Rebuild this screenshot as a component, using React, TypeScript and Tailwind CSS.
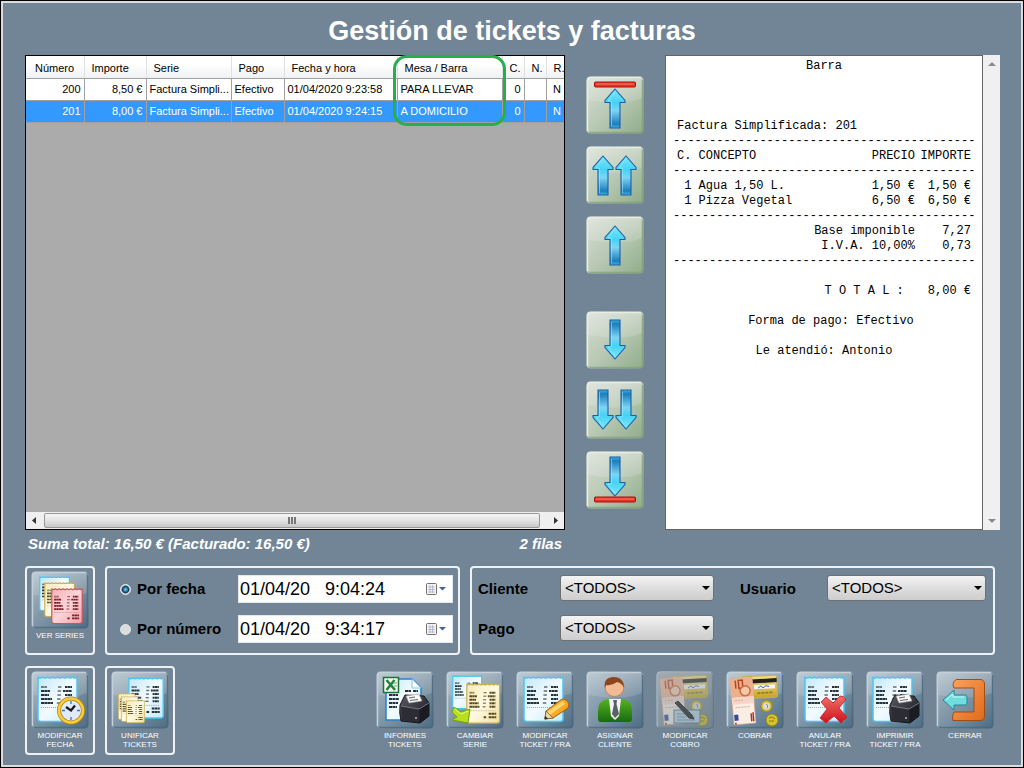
import { useState } from 'react';
import type { ReactNode } from 'react';

const TICKETS = [
  { numero: '200', importe: '8,50 €', serie: 'Factura Simpli...', pago: 'Efectivo', fecha: '01/04/2020 9:23:58', mesa: 'PARA LLEVAR', c: '0', n: '', r: 'N' },
  { numero: '201', importe: '8,00 €', serie: 'Factura Simpli...', pago: 'Efectivo', fecha: '01/04/2020 9:24:15', mesa: 'A DOMICILIO', c: '0', n: '', r: 'N' },
];

const HEADERS = ['Número', 'Importe', 'Serie', 'Pago', 'Fecha y hora', 'Mesa / Barra', 'C.', 'N.', 'R.'];

const DASHES = '-'.repeat(42);

// Gradients shared by every icon on the page
function IconDefs() {
  return (
    <svg className="absolute size-0" aria-hidden="true">
      <defs>
        <linearGradient id="slate" x1="0" y1="0" x2="1" y2="1">
          <stop offset="0" stopColor="#a9bac6" />
          <stop offset="0.5" stopColor="#7e95a6" />
          <stop offset="1" stopColor="#4d6c83" />
        </linearGradient>
        <linearGradient id="sage" x1="0" y1="0" x2="1" y2="1">
          <stop offset="0" stopColor="#d6ded4" />
          <stop offset="0.5" stopColor="#b9c9b5" />
          <stop offset="1" stopColor="#8fac89" />
        </linearGradient>
        <linearGradient id="gloss" x1="0" y1="0" x2="0" y2="1">
          <stop offset="0" stopColor="#fff" stopOpacity="0.25" />
          <stop offset="1" stopColor="#fff" stopOpacity="0.12" />
        </linearGradient>
        <linearGradient id="arrow" x1="0" y1="0" x2="0" y2="1">
          <stop offset="0" stopColor="#7fe6fb" />
          <stop offset="0.35" stopColor="#45d3f5" />
          <stop offset="0.55" stopColor="#7ed4f3" />
          <stop offset="0.9" stopColor="#1b7dbb" />
          <stop offset="1" stopColor="#3fb4e0" />
        </linearGradient>
        <linearGradient id="bluePaper" x1="0" y1="0" x2="1" y2="1">
          <stop offset="0" stopColor="#c3e8f8" />
          <stop offset="0.5" stopColor="#f3fbff" />
          <stop offset="1" stopColor="#c5eafa" />
        </linearGradient>
        <linearGradient id="creamPaper" x1="0" y1="0" x2="1" y2="1">
          <stop offset="0" stopColor="#f7ebb9" />
          <stop offset="0.5" stopColor="#fff9e2" />
          <stop offset="1" stopColor="#efdf9f" />
        </linearGradient>
        <linearGradient id="pinkPaper" x1="0" y1="0" x2="1" y2="1">
          <stop offset="0" stopColor="#f6b3b9" />
          <stop offset="0.5" stopColor="#fad5d8" />
          <stop offset="1" stopColor="#f09fa8" />
        </linearGradient>
        <linearGradient id="green" x1="0" y1="0" x2="0" y2="1">
          <stop offset="0" stopColor="#57b21f" />
          <stop offset="1" stopColor="#176b10" />
        </linearGradient>
        <linearGradient id="orange" x1="0" y1="0" x2="1" y2="1">
          <stop offset="0" stopColor="#f9a25c" />
          <stop offset="1" stopColor="#e06a1c" />
        </linearGradient>
        <linearGradient id="red" x1="0" y1="0" x2="0" y2="1">
          <stop offset="0" stopColor="#f0706a" />
          <stop offset="1" stopColor="#cf1219" />
        </linearGradient>
        <linearGradient id="printer" x1="0" y1="0" x2="1" y2="1">
          <stop offset="0" stopColor="#5c5c66" />
          <stop offset="1" stopColor="#14141a" />
        </linearGradient>
        <linearGradient id="gold" x1="0" y1="0" x2="0" y2="1">
          <stop offset="0" stopColor="#efe08a" />
          <stop offset="1" stopColor="#c5a52f" />
        </linearGradient>
      </defs>
    </svg>
  );
}

function Tile({ tone = 'slate', children }: { tone?: 'slate' | 'sage'; children: ReactNode }) {
  const light = tone === 'slate' ? '#c3d0d9' : '#e6eee3';
  const dark = tone === 'slate' ? '#48657b' : '#7fa078';
  return (
    <svg viewBox="0 0 58 58" className="size-[58px] shrink-0" aria-hidden="true">
      <rect x="0.5" y="0.5" width="57" height="57" rx="4" fill={tone === 'slate' ? 'url(#slate)' : 'url(#sage)'} />
      <path d="M2 4Q2 2 4 2H54Q56 2 56 4V22Q38 30 2 24Z" fill="url(#gloss)" />
      <path d="M1.5 55V5Q1.5 1.500 5 1.500H55" fill="none" stroke={light} strokeWidth="1.500" />
      <path d="M3 56.500H53Q56.500 56.500 56.500 53V4" fill="none" stroke={dark} strokeWidth="1.500" opacity="0.7" />
      {children}
    </svg>
  );
}

const PAPERS = {
  blue: { fill: 'url(#bluePaper)', edge: '#4fc3f0', ink: '#27323a' },
  cream: { fill: 'url(#creamPaper)', edge: '#c9ad55', ink: '#594a1d' },
  pink: { fill: 'url(#pinkPaper)', edge: '#c9565f', ink: '#7c1f2b' },
};

type PaperProps = { x: number; y: number; scale?: number; scaleY?: number; color?: keyof typeof PAPERS; total?: boolean };

// A printed ticket on a 40x46 sheet with a torn top edge
function Paper({ x, y, scale = 1, scaleY = scale, color = 'blue', total = false }: PaperProps) {
  const { fill, edge, ink } = PAPERS[color];
  const words = [6, 9, 8, 11, 12];
  return (
    <g transform={`translate(${x} ${y}) scale(${scale} ${scaleY})`}>
      <path
        d="M1 1Q3 3 5.500 1Q8 3 10.500 1Q13 3 15.500 1Q18 3 20.500 1Q23 3 25.500 1Q28 3 30.500 1Q33 3 35.500 1Q38 3 40 1V43Q40 45.500 37 45.500H4Q1 45.500 1 43Z"
        fill={fill}
        stroke={edge}
        strokeWidth="1.500"
        strokeLinejoin="round"
      />
      <g stroke={ink} strokeWidth="2.200">
        {words.map((w, i) => (
          <g key={i}>
            <path d={`M4 ${11 + i * 4}h${w}`} strokeDasharray="3.200 0.300 2.500 0.300" opacity={i === 0 ? 0.6 : 1} />
            <path d={`M${21 - i * 0.3} ${11 + i * 4}h3.500`} strokeWidth="1.500" opacity="0.7" />
            <path d={`M${i === 1 ? 26 : 28} ${11 + i * 4}h${i === 1 ? 9 : 7}`} strokeDasharray="2.200 0.400 3 0.300" />
          </g>
        ))}
        <path d="M4 31.500H36" strokeWidth="0.700" strokeDasharray="1 1" opacity="0.6" />
        {total && <path d="M27 35h9M21 39h3M27 39h9" strokeDasharray="3 0.400" />}
      </g>
    </g>
  );
}

function Printer() {
  return (
    <g>
      <path d="M24 34L29 24L48 25L53 32V45L44 52L25 50Q23 42 24 34Z" fill="url(#printer)" stroke="#15151b" />
      <path d="M25 35L43 38V51L26 49Z" fill="#2c2c35" />
      <path d="M43 38L53 32V45L44 52Z" fill="#1b1b22" />
      <path d="M25 35L43 38L53 32" fill="none" stroke="#777783" />
      <path d="M30 25L43 23L46 30L33 32Z" fill="#f7f7f7" stroke="#999" strokeWidth="0.600" />
      <path d="M33 27l6-1M34 29.500l8-1" stroke="#555" strokeWidth="0.900" />
      <circle cx="40" cy="47" r="0.900" fill="#c6c6d0" />
    </g>
  );
}

function Money() {
  return (
    <g>
      <g transform="rotate(-3 34 16)">
        <rect x="16" y="5" width="35" height="22" rx="2" fill="url(#gold)" stroke="#c9b04c" />
        <rect x="16" y="8" width="35" height="4" fill="#25201c" />
        <rect x="28" y="14" width="21" height="4" fill="#f4f4f0" />
        <path d="M32 17l3-2 2 2 3-2 3 1" fill="none" stroke="#4157a6" strokeWidth="0.900" />
        <path d="M31 22h16" stroke="#8b7426" strokeWidth="1.500" strokeDasharray="3 1" />
      </g>
      <g transform="rotate(-5 18 30)">
        <path d="M6 7H28V53H6Z" fill="#faeee4" stroke="#d99a78" strokeWidth="0.600" />
        <path d="M6 7H28V26H6Z" fill="#eeb08c" />
        <path d="M11 9v8M14 9h4v8h-4z" stroke="#b74624" strokeWidth="1.500" fill="none" />
        <circle cx="20" cy="20" r="5" fill="#f5c9a8" stroke="#cc6b43" strokeWidth="1.500" />
        <path d="M6 26h22v7H6z" fill="#f6d5c8" />
        <path d="M7 43h4v6H7z" fill="#34499a" />
        <path d="M24 43v8M26 42v9M8 51v2" stroke="#a7332a" strokeWidth="1.500" />
        <path d="M9 29h9M9 36h14" stroke="#dda58e" strokeDasharray="2 1" />
      </g>
      <circle cx="40.500" cy="35" r="5.500" fill="#d8bc34" stroke="#a88c1b" />
      <circle cx="40.500" cy="35" r="3.500" fill="#dcdcd9" />
      <path d="M40 33l1.500 1v3" fill="none" stroke="#8d8d88" />
      <circle cx="46" cy="49" r="6" fill="#d5c22e" stroke="#998811" />
      <path d="M43 47l3-1 3 2M43 50h5" stroke="#8b7a10" fill="none" />
    </g>
  );
}

const UP = 'M0 0L10 11.500V13.500H5V39H-5V13.500H-10V11.500Z';

function Arrow({ x, y, down = false }: { x: number; y: number; down?: boolean }) {
  return (
    <g transform={`translate(${x} ${down ? y + 39 : y}) scale(1 ${down ? -1 : 1})`}>
      <path d={UP} fill="url(#arrow)" stroke="#1c5fa6" strokeWidth="1.100" strokeLinejoin="miter" />
      <path d="M-3.500 37V12H-7L0 3" fill="none" stroke="#a6eefc" strokeWidth="0.800" opacity="0.7" />
    </g>
  );
}

function Bar({ y }: { y: number }) {
  return (
    <g>
      <rect x="8.500" y={y} width="41" height="5" rx="1" fill="#e8311f" stroke="#a51410" />
      <path d={`M10 ${y + 2}H48`} stroke="#f58274" />
    </g>
  );
}

const ICONS: Record<string, ReactNode> = {
  series: (
    <>
      <Paper x={8} y={5} scale={0.76} />
      <Paper x={13} y={11} scale={0.76} color="cream" />
      <Paper x={20} y={17} scale={0.78} color="pink" total />
    </>
  ),
  fecha: (
    <>
      <Paper x={6} y={5} />
      <circle cx="40" cy="39.500" r="12" fill="#dfeafd" stroke="#b8860b" strokeWidth="4" />
      <circle cx="40" cy="39.500" r="12" fill="none" stroke="#f7cf3c" strokeWidth="2.500" />
      <path d="M40 30v3M40 46v3M31 39.500h3M46 39.500h3" stroke="#3d6fd0" strokeWidth="1.300" />
      <path d="M35 36l5 3.500l4-5" fill="none" stroke="#1b1b1b" strokeWidth="2.300" />
    </>
  ),
  unificar: (
    <>
      <Paper x={17} y={6} scale={0.88} scaleY={0.9} total />
      <Paper x={7} y={22} scale={0.42} scaleY={0.58} color="cream" />
      <Paper x={10} y={25} scale={0.42} scaleY={0.56} color="cream" />
      <Paper x={15} y={29} scale={0.46} scaleY={0.5} color="cream" total />
    </>
  ),
  informes: (
    <>
      <path d="M10 8H36L45 17V49H10Z" fill="url(#bluePaper)" stroke="#2d7fd0" strokeWidth="1.500" />
      <path d="M36 8V17H45Z" fill="#fff" stroke="#7fc7ee" />
      <path d="M13 24h9M13 28h10M13 32h9M13 36h8M29 20h6M37 20h5" stroke="#26313a" strokeWidth="1.800" strokeDasharray="3 0.400" />
      <Printer />
      <rect x="7.500" y="6.500" width="15" height="15" fill="#f2f8f0" stroke="#1c7334" strokeWidth="1.500" />
      <path d="M10.500 9L19 19M18.500 9L10.500 19" stroke="#238340" strokeWidth="2.600" />
      <path d="M17 12h4M18 15h3" stroke="#65ad78" />
    </>
  ),
  serie: (
    <>
      <Paper x={6} y={4} scale={0.74} />
      <Paper x={20} y={12} scale={0.84} scaleY={0.88} color="cream" total />
      <path d="M8 36L15 41L24 38L22 52L6 49L11 46L6 41Z" fill="#b6df20" stroke="#759e0c" />
      <path d="M9 38L15 43L22 40" fill="none" stroke="#e8fa85" />
    </>
  ),
  modificar: (
    <>
      <Paper x={7} y={5} />
      <path d="M30 40L46 28Q51 28 53 33L52 37L37 47L29 48Z" fill="#f7a825" stroke="#a35e0e" />
      <path d="M31 41L47 30L49 33L34 44Z" fill="#ffd66c" />
      <path d="M30 40L37 47L29 48Z" fill="#f2d7a5" stroke="#765020" strokeWidth="0.700" />
      <path d="M29 45L32 47.500L28.500 48.500Z" fill="#272727" />
    </>
  ),
  cliente: (
    <>
      <path d="M12 48V40Q12 29 22 28H36Q46 29 46 40V48Q46 51 43 51H15Q12 51 12 48Z" fill="url(#green)" />
      <path d="M23 28H35L33 45L29 49L25 45Z" fill="#f1f3f4" />
      <path d="M27 29H31L30.500 33L33 43L29 47L26 43L28 33Z" fill="#5c5f67" />
      <circle cx="28.500" cy="16" r="9.500" fill="#f3bb91" stroke="#ae6840" strokeWidth="0.600" />
      <path d="M19 17Q17 7 27 6Q38 6 38 17Q36 12 31 11Q26 15 20 14Z" fill="#8b461b" />
    </>
  ),
  modificarCobro: (
    <>
      <rect x="1" y="1" width="56" height="56" rx="4" fill="#8c949a" opacity="0.6" />
      <g opacity="0.55">
        <Money />
        <rect x="18" y="39" width="26" height="13" fill="#bcd5e2" stroke="#54788e" />
        <path d="M21 43h12M21 46h9M21 49h18" stroke="#71909f" />
        <path d="M19 32L22 30L36 44L38 48L33 47Z" fill="#1d1d1d" stroke="#111" />
      </g>
    </>
  ),
  cobrar: <Money />,
  anular: (
    <>
      <Paper x={8} y={5} />
      <path
        d="M25 31L30 26L37 32L44 25Q48 25 50 28L43 37L51 46L45 52L38 45L30 52L24 47L31 38Z"
        fill="url(#red)"
        stroke="#c42222"
        strokeWidth="0.800"
      />
    </>
  ),
  imprimir: (
    <>
      <Paper x={6} y={5} />
      <Printer />
    </>
  ),
  cerrar: (
    <>
      <path d="M20 8.500H44Q48.500 8.500 48.500 13V45Q48.500 49.500 44 49.500H17Q15.500 45 18 41H38V17H18Q15.500 12 20 8.500Z" fill="url(#orange)" stroke="#a34c13" />
      <path d="M7 29L18 19V24H29Q31 24 31 26V32Q31 34 29 34H18V39Z" fill="#6fdce0" stroke="#2a8494" />
      <path d="M10 29L17 23V26H28" fill="none" stroke="#c8f6f5" />
    </>
  ),
};

function ToolButton({ icon, label }: { icon: string; label: string }) {
  return (
    <button type="button" className="flex w-[58px] cursor-pointer flex-col items-center gap-0.5 text-center text-[8px] leading-[9px] whitespace-pre-line text-white">
      <Tile>{ICONS[icon]}</Tile>
      <span>{label}</span>
    </button>
  );
}

function FramedTool({ icon, label }: { icon: string; label: string }) {
  return (
    <div className="flex h-[89px] w-[70px] shrink-0 items-start justify-center rounded-sm border-2 border-[#eef2f5] pt-[3px]">
      <ToolButton icon={icon} label={label} />
    </div>
  );
}

function NavButton({ label, children }: { label: string; children: ReactNode }) {
  return (
    <button type="button" aria-label={label} className="cursor-pointer">
      <Tile tone="sage">{children}</Tile>
    </button>
  );
}

function TicketTable() {
  const [selected, setSelected] = useState('201');
  return (
    <div className="relative min-w-0">
      <div className="flex h-full flex-col overflow-hidden border border-black bg-[#ababab]">
        <table className="w-full table-fixed border-collapse text-[11px] text-black">
          <colgroup>
            <col className="w-[58px]" />
            <col className="w-[62px]" />
            <col className="w-[85px]" />
            <col className="w-[53px]" />
            <col className="w-[113px]" />
            <col className="w-[105px]" />
            <col className="w-[22px]" />
            <col className="w-[22px]" />
            <col />
          </colgroup>
          <thead>
            <tr className="h-[22px] bg-linear-to-b from-white from-40% to-[#eff0f2]">
              {HEADERS.map((h) => (
                <th
                  key={h}
                  className="overflow-hidden border-r border-b border-r-[#dfe0e2] border-b-[#a0a0a0] p-0 pt-0.5 pl-[7px] text-left font-normal whitespace-nowrap first:pl-[9px] last:border-r-0"
                >
                  {h}
                </th>
              ))}
            </tr>
          </thead>
          <tbody>
            {TICKETS.map((t) => (
              <tr
                key={t.numero}
                onClick={() => setSelected(t.numero)}
                className={`h-[22px] [&>td]:overflow-hidden [&>td]:border-r [&>td]:border-b [&>td]:border-[#a0a0a0] [&>td]:px-[3px] [&>td]:py-0 [&>td]:whitespace-nowrap [&>td:last-child]:border-r-0 ${
                  t.numero === selected ? 'bg-[#3399ff] text-white' : 'bg-white'
                }`}
              >
                <td className="text-right">{t.numero}</td>
                <td className="text-right">{t.importe}</td>
                <td>{t.serie}</td>
                <td>{t.pago}</td>
                <td>{t.fecha}</td>
                <td>{t.mesa}</td>
                <td className="text-right">{t.c}</td>
                <td>{t.n}</td>
                <td className="text-right">{t.r}</td>
              </tr>
            ))}
          </tbody>
        </table>
        <div className="mt-auto flex h-[17px] items-center bg-[#efefef]">
          <svg viewBox="0 0 18 17" className="h-[17px] w-[18px]" aria-hidden="true">
            <path d="M10 5V12L6 8.500Z" fill="#333" />
          </svg>
          <div className="flex h-[15px] flex-1 items-center justify-center gap-px rounded-xs border border-[#979797] bg-linear-to-b from-[#f5f5f5] via-[#e2e2e2] to-[#c8c8c8]">
            <span className="h-[7px] w-0.5 bg-[#777]" />
            <span className="h-[7px] w-0.5 bg-[#777]" />
            <span className="h-[7px] w-0.5 bg-[#777]" />
          </div>
          <svg viewBox="0 0 24 17" className="h-[17px] w-6" aria-hidden="true">
            <path d="M14 5V12L18 8.500Z" fill="#333" />
          </svg>
        </div>
      </div>
      <div className="pointer-events-none absolute top-0 left-[368px] h-[71px] w-[113px] rounded-[14px] border-3 border-[#22b14c]" />
    </div>
  );
}

function DashRow() {
  return (
    <tr>
      <td colSpan={3} className="p-0">
        <div className="-mx-1">{DASHES}</div>
      </td>
    </tr>
  );
}

function ReceiptRow({ left, mid, right }: { left: string; mid: string; right: string }) {
  return (
    <tr>
      <td className="p-0 whitespace-pre">{left}</td>
      <td className="p-0 text-right">{mid}</td>
      <td className="p-0 text-right">{right}</td>
    </tr>
  );
}

function TotalRow({ label, value }: { label: string; value: string }) {
  return (
    <tr>
      <td colSpan={2} className="p-0 text-right">{label}</td>
      <td className="p-0 text-right">{value}</td>
    </tr>
  );
}

function Receipt() {
  return (
    <div className="flex min-w-0">
      <div className="flex-1 overflow-hidden border border-[#646464] bg-white px-[11px] pt-[3px] font-['Liberation_Mono','Courier_New',monospace] text-[12px] leading-[15px] whitespace-nowrap text-black">
        <p className="text-center">Barra</p>
        <p className="pt-[45px]">Factura Simplificada: 201</p>
        <table className="w-full table-fixed border-collapse">
          <colgroup>
            <col />
            <col className="w-[60px]" />
            <col className="w-[56px]" />
          </colgroup>
          <tbody>
            <DashRow />
            <ReceiptRow left="C. CONCEPTO" mid="PRECIO" right="IMPORTE" />
            <DashRow />
            <ReceiptRow left=" 1 Agua 1,50 L." mid="1,50 €" right="1,50 €" />
            <ReceiptRow left=" 1 Pizza Vegetal" mid="6,50 €" right="6,50 €" />
            <DashRow />
            <TotalRow label="Base imponible" value="7,27" />
            <TotalRow label="I.V.A. 10,00%" value="0,73" />
            <DashRow />
          </tbody>
        </table>
        <p className="flex justify-end gap-6 pt-[15px]">
          <span>T O T A L :</span>
          <span>8,00 €</span>
        </p>
        <p className="pt-[15px] pl-[14px] text-center">Forma de pago: Efectivo</p>
        <p className="pt-[15px] text-center">Le atendió: Antonio</p>
      </div>
      <div className="flex w-[17px] flex-col items-center justify-between bg-[#f0f0f0] py-[5px]">
        <svg viewBox="0 0 8 8" className="size-2" aria-hidden="true">
          <path d="M0 6L4 2L8 6Z" fill="#8a8a8a" />
        </svg>
        <svg viewBox="0 0 8 8" className="size-2" aria-hidden="true">
          <path d="M0 2L4 6L8 2Z" fill="#8a8a8a" />
        </svg>
      </div>
    </div>
  );
}

function DateRow({ label, value, checked, onSelect }: { label: string; value: string; checked: boolean; onSelect: () => void }) {
  return (
    <div className="flex h-7 items-center">
      <label className="flex w-[118px] shrink-0 items-center gap-[6px] text-[15px] font-bold">
        <input
          type="radio"
          name="filtro"
          checked={checked}
          onChange={onSelect}
          className="size-[11px] appearance-none rounded-full border border-[#e4e8eb] bg-[#dcdcdc] checked:bg-radial checked:from-[#5cc4f2] checked:from-10% checked:via-[#123c5c] checked:via-50% checked:to-[#f4f4f4] checked:to-75%"
        />
        {label}
      </label>
      <div className="flex h-7 min-w-0 flex-1 items-center border border-[#e3e9ef] bg-white pr-[5px]">
        <input type="text" aria-label={label} defaultValue={value} className="min-w-0 flex-1 bg-transparent pl-px text-[18px] whitespace-pre text-black outline-none" />
        <svg viewBox="0 0 22 14" className="h-[14px] w-[22px]" aria-hidden="true">
          <rect x="1.500" y="1.500" width="10" height="11" rx="1" fill="#f4f4f4" stroke="#77706c" />
          <path d="M3 5h7M3 7.500h7M3 10h7M5 3v8M7.500 3v8" stroke="#a9b3c4" strokeWidth="0.800" />
          <path d="M14 5H21L17.500 8.500Z" fill="#41608f" />
        </svg>
      </div>
    </div>
  );
}

function FilterSelect({ id, label }: { id: string; label: string }) {
  return (
    <>
      <label htmlFor={id} className="flex h-7 items-center text-[15px] font-bold">
        {label}
      </label>
      <div className="relative h-[26px] min-w-0">
        <select
          id={id}
          className="h-full w-full appearance-none rounded-[3px] border border-[#707070] bg-linear-to-b from-[#f4f4f4] from-0% via-[#dedede] via-50% to-[#cdcdcd] pl-1 text-[15px] text-black"
        >
          <option>&lt;TODOS&gt;</option>
        </select>
        <svg viewBox="0 0 8 4" className="pointer-events-none absolute top-[11px] right-1 h-1 w-2" aria-hidden="true">
          <path d="M0 0H8L4 4Z" fill="#000" />
        </svg>
      </div>
    </>
  );
}

function Filters() {
  const [mode, setMode] = useState('fecha');
  return (
    <div className="grid grid-cols-[70px_355fr_525fr] gap-x-[10px] pr-[26px]">
      <FramedTool icon="series" label="VER SERIES" />
      <div className="flex min-w-0 flex-col gap-3 rounded-sm border-2 border-[#eef2f5] pt-[7px] pr-[5px] pl-[13px]">
        <DateRow label="Por fecha" value="01/04/20   9:04:24" checked={mode === 'fecha'} onSelect={() => setMode('fecha')} />
        <DateRow label="Por número" value="01/04/20   9:34:17" checked={mode === 'numero'} onSelect={() => setMode('numero')} />
      </div>
      <div className="grid min-w-0 grid-cols-[236fr_246fr] items-start gap-x-[26px] rounded-sm border-2 border-[#eef2f5] pt-[7px] pr-[7px] pl-[6px]">
        <div className="grid grid-cols-[82px_1fr] gap-y-3">
          <FilterSelect id="cliente" label="Cliente" />
          <FilterSelect id="pago" label="Pago" />
        </div>
        <div className="grid grid-cols-[87px_1fr]">
          <FilterSelect id="usuario" label="Usuario" />
        </div>
      </div>
    </div>
  );
}

const TOOLS = [
  { icon: 'informes', label: 'INFORMES\nTICKETS' },
  { icon: 'serie', label: 'CAMBIAR\nSERIE' },
  { icon: 'modificar', label: 'MODIFICAR\nTICKET / FRA' },
  { icon: 'cliente', label: 'ASIGNAR\nCLIENTE' },
  { icon: 'modificarCobro', label: 'MODIFICAR\nCOBRO' },
  { icon: 'cobrar', label: 'COBRAR' },
  { icon: 'anular', label: 'ANULAR\nTICKET / FRA' },
  { icon: 'imprimir', label: 'IMPRIMIR\nTICKET / FRA' },
  { icon: 'cerrar', label: 'CERRAR' },
];

export default function App() {
  return (
    <div className="flex min-h-screen flex-col border border-black font-['Liberation_Sans',Arial,sans-serif]">
      <IconDefs />
      <main className="flex flex-1 flex-col border-2 border-[#dcdcdc] bg-[#718596] pl-[22px]">
        <h1 className="h-[52px] pt-2 pr-[22px] text-center text-[27px] leading-10 font-bold text-white">Gestión de tickets y facturas</h1>

        <section className="grid flex-1 grid-cols-[540fr_58px_335fr] gap-x-[21px] pr-[21px]">
          <TicketTable />
          <nav className="flex flex-col gap-3 pt-[21px]">
            <NavButton label="Primero">
              <Arrow x={29} y={13} />
              <Bar y={6} />
            </NavButton>
            <NavButton label="Página anterior">
              <Arrow x={17} y={10} />
              <Arrow x={40} y={10} />
            </NavButton>
            <NavButton label="Anterior">
              <Arrow x={29} y={10} />
            </NavButton>
            <div className="h-[13px]" />
            <NavButton label="Siguiente">
              <Arrow x={29} y={9} down />
            </NavButton>
            <NavButton label="Página siguiente">
              <Arrow x={17} y={9} down />
              <Arrow x={40} y={9} down />
            </NavButton>
            <NavButton label="Último">
              <Arrow x={29} y={6} down />
              <Bar y={46} />
            </NavButton>
          </nav>
          <Receipt />
        </section>

        <div className="grid grid-cols-[540fr_58px_335fr] gap-x-[21px] pr-[21px]">
          <div className="flex h-9 justify-between px-[3px] pt-1 text-[15px] leading-5 font-bold text-white italic">
            <span>Suma total: 16,50 € (Facturado: 16,50 €)</span>
            <span>2 filas</span>
          </div>
        </div>

        <Filters />

        <footer className="flex gap-[10px] pt-[11px] pr-[27px] pb-[10px]">
          <FramedTool icon="fecha" label={'MODIFICAR\nFECHA'} />
          <FramedTool icon="unificar" label={'UNIFICAR\nTICKETS'} />
          <div className="ml-auto flex items-start gap-3 pt-[5px]">
            {TOOLS.map((t) => (
              <ToolButton key={t.icon} icon={t.icon} label={t.label} />
            ))}
          </div>
        </footer>
      </main>
    </div>
  );
}
